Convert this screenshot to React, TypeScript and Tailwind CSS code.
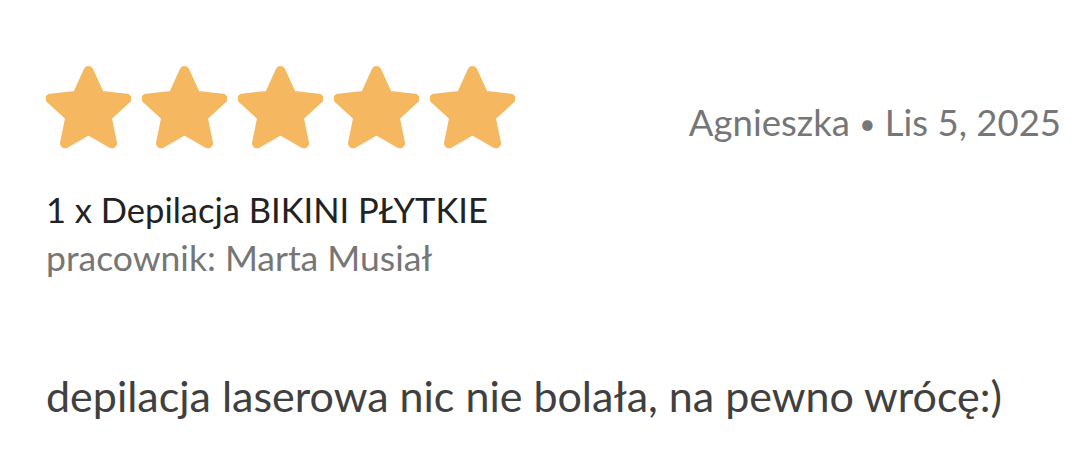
const STAR_POINTS = Array.from({ length: 10 }, (_, i) => {
  const a = ((-90 + 36 * i) * Math.PI) / 180
  const r = i % 2 === 0 ? 40 : 19
  return `${(42.5 + r * Math.cos(a)).toFixed(2)},${(46 + r * Math.sin(a)).toFixed(2)}`
}).join(' ')

function Star() {
  return (
    <svg width="85" height="86" viewBox="0 0 85 86" className="shrink-0">
      <polygon
        points={STAR_POINTS}
        fill="#f5b861"
        stroke="#f5b861"
        strokeWidth="10"
        strokeLinejoin="round"
      />
    </svg>
  )
}

export default function App() {
  return (
    <div className="h-[456px] w-[1085px] bg-white pl-[46px] pr-[24px] font-['Lato',sans-serif]">
      <div className="flex items-start justify-between pt-[65px]">
        <div className="flex gap-[11px]">
          {[0, 1, 2, 3, 4].map((i) => (
            <Star key={i} />
          ))}
        </div>
        <div className="mt-[37px] text-[36.5px] leading-[40px] text-[#767676]">
          Agnieszka <span className="relative -top-[2px] text-[28px]">•</span> Lis 5, 2025
        </div>
      </div>

      <div className="mt-[35px] text-[34.5px] leading-[48px] text-[#222222]">
        1 x Depilacja BIKINI PŁYTKIE
      </div>
      <div className="text-[35.5px] leading-[48px] text-[#767676]">pracownik: Marta Musiał</div>

      <p className="mt-[90px] text-[43px] leading-[48px] text-[#404040]">
        depilacja laserowa nic nie bolała, na pewno wrócę:)
      </p>
    </div>
  )
}
